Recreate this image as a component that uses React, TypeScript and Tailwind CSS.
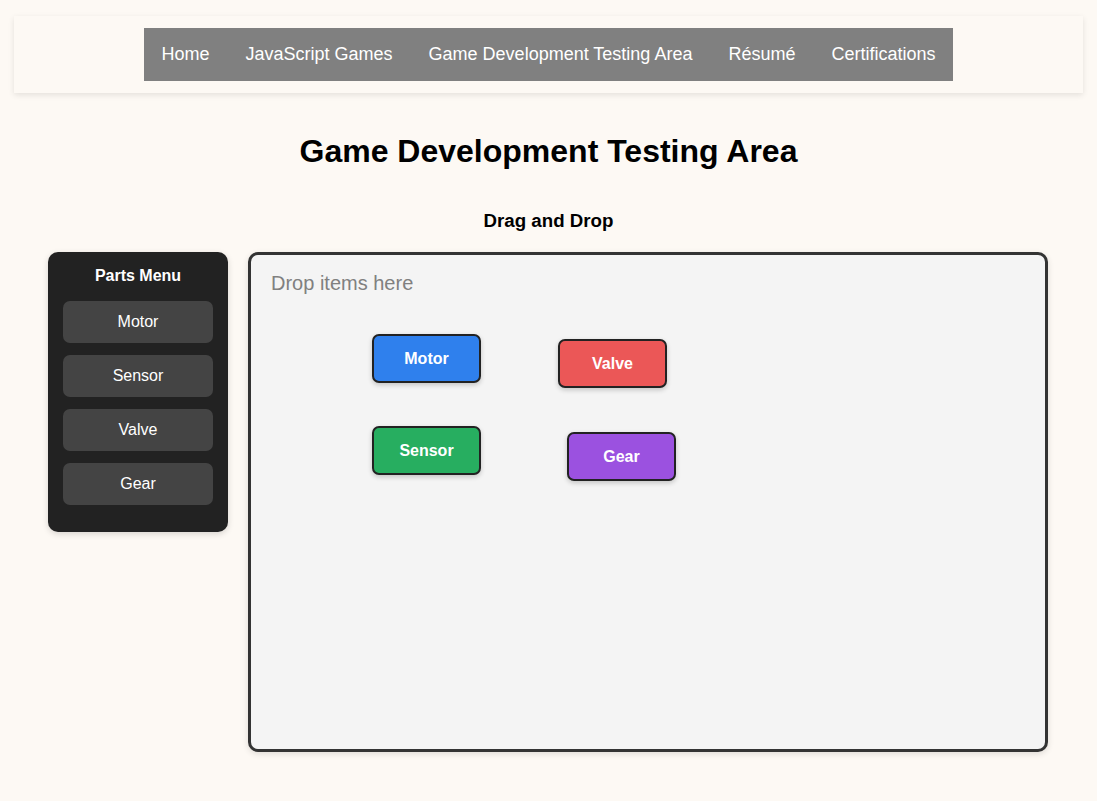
import React from "react";

const navItems = ["Home", "JavaScript Games", "Game Development Testing Area", "Résumé", "Certifications"];
const parts = ["Motor", "Sensor", "Valve", "Gear"];

const blocks = [
  { label: "Motor", cls: "bg-[#2f80ed] left-[121px] top-[79px]" },
  { label: "Valve", cls: "bg-[#eb5757] left-[307px] top-[84px]" },
  { label: "Sensor", cls: "bg-[#27ae60] left-[121px] top-[171px]" },
  { label: "Gear", cls: "bg-[#9b51e0] left-[316px] top-[177px]" },
];

export default function App() {
  return (
    <div className="min-h-[801px] bg-[#fdf9f4] pt-4 pb-12 font-['Liberation_Sans',Arial,sans-serif] text-black">
      <header className="mx-[14px] flex justify-center bg-[#fdf9f4] py-3 shadow-[0_2px_6px_rgba(0,0,0,0.1)]">
        <nav className="flex bg-[#808080]">
          {navItems.map((n) => (
            <a key={n} className="px-[18px] py-4 text-[18px] leading-[21px] text-white">
              {n}
            </a>
          ))}
        </nav>
      </header>

      <h1 className="mt-[40px] text-center text-[32px] font-bold leading-[37px]">Game Development Testing Area</h1>
      <h3 className="mt-[40px] text-center text-[18.7px] font-bold leading-[22px]">Drag and Drop</h3>

      <div className="ml-[48px] mt-[20px] flex w-[1000px] items-start gap-5">
        <div className="w-[180px] rounded-[10px] bg-[#222] px-[15px] pt-[14px] pb-[15px] shadow-[0_2px_6px_rgba(0,0,0,0.15)]">
          <h4 className="mb-4 text-center text-[16px] font-bold leading-[19px] text-white">Parts Menu</h4>
          <div className="flex flex-col gap-3">
            {parts.map((p) => (
              <div
                key={p}
                className="flex h-[42px] items-center justify-center rounded-[7px] bg-[#444] text-[16px] text-white"
              >
                {p}
              </div>
            ))}
          </div>
          <div className="h-3" />
        </div>

        <div className="relative h-[500px] w-[800px] rounded-[10px] border-[3px] border-[#333] bg-[#f4f4f4] pl-5 pt-[17px] shadow-[0_2px_6px_rgba(0,0,0,0.12)]">
          <p className="text-[20px] leading-[23px] text-[#808080]">Drop items here</p>
          {blocks.map((b) => (
            <div
              key={b.label}
              className={`absolute flex h-[49px] w-[109px] items-center justify-center rounded-[7px] border-2 border-[#222] text-[16px] font-bold text-white shadow-[0_2px_5px_rgba(0,0,0,0.2)] ${b.cls}`}
            >
              {b.label}
            </div>
          ))}
        </div>
      </div>
    </div>
  );
}
